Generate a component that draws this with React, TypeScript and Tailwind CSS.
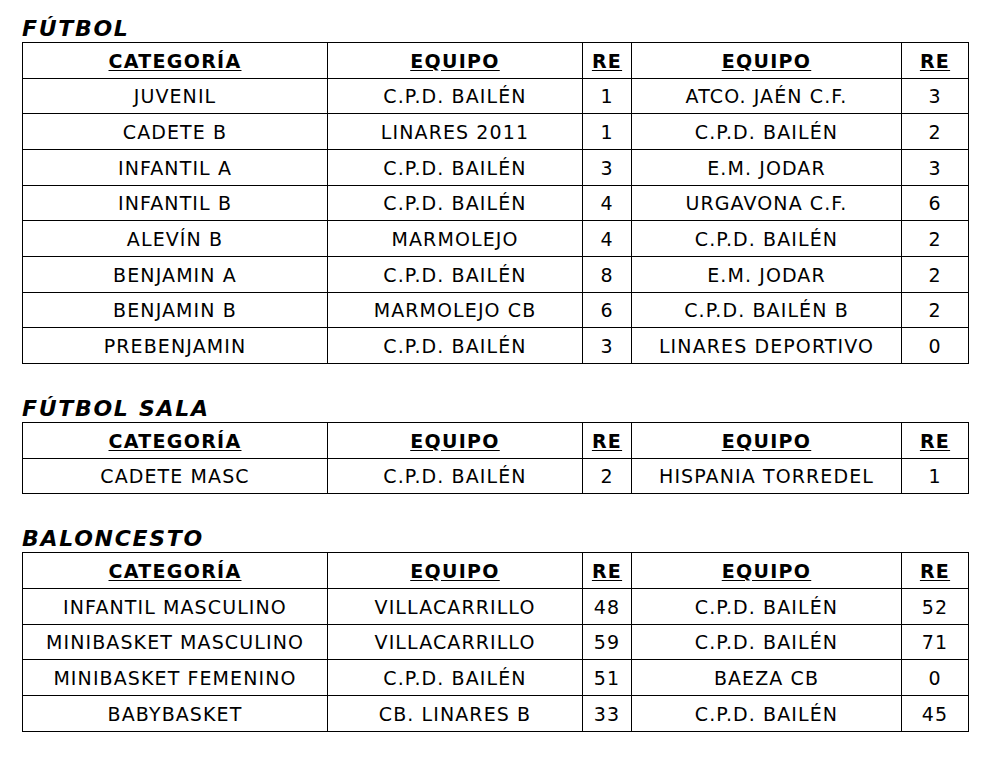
import React from "react";

type Row = [string, string, string, string, string];

const futbol: Row[] = [
  ["JUVENIL", "C.P.D. BAILÉN", "1", "ATCO. JAÉN C.F.", "3"],
  ["CADETE B", "LINARES 2011", "1", "C.P.D. BAILÉN", "2"],
  ["INFANTIL A", "C.P.D. BAILÉN", "3", "E.M. JODAR", "3"],
  ["INFANTIL B", "C.P.D. BAILÉN", "4", "URGAVONA C.F.", "6"],
  ["ALEVÍN B", "MARMOLEJO", "4", "C.P.D. BAILÉN", "2"],
  ["BENJAMIN A", "C.P.D. BAILÉN", "8", "E.M. JODAR", "2"],
  ["BENJAMIN B", "MARMOLEJO CB", "6", "C.P.D. BAILÉN B", "2"],
  ["PREBENJAMIN", "C.P.D. BAILÉN", "3", "LINARES DEPORTIVO", "0"],
];

const sala: Row[] = [["CADETE MASC", "C.P.D. BAILÉN", "2", "HISPANIA TORREDEL", "1"]];

const baloncesto: Row[] = [
  ["INFANTIL MASCULINO", "VILLACARRILLO", "48", "C.P.D. BAILÉN", "52"],
  ["MINIBASKET MASCULINO", "VILLACARRILLO", "59", "C.P.D. BAILÉN", "71"],
  ["MINIBASKET FEMENINO", "C.P.D. BAILÉN", "51", "BAEZA CB", "0"],
  ["BABYBASKET", "CB. LINARES B", "33", "C.P.D. BAILÉN", "45"],
];

function Table({ title, rows, first }: { title: string; rows: Row[]; first?: boolean }) {
  return (
    <div>
      <div
        className={`${first ? "pt-4" : "pt-[32px]"} text-[22px] leading-[26px] font-bold italic tracking-[1.7px] text-black`}
      >
        {title}
      </div>
      <table className="border-collapse table-fixed w-[946px] text-[19px] text-black">
        <colgroup>
          <col className="w-[305px]" />
          <col className="w-[255px]" />
          <col className="w-[49px]" />
          <col className="w-[270px]" />
          <col className="w-[67px]" />
        </colgroup>
        <thead>
          <tr className="h-[35.67px]">
            {["CATEGORÍA", "EQUIPO", "RE", "EQUIPO", "RE"].map((h, i) => (
              <th key={i} className="border border-black p-0 pt-[2px] text-center font-bold leading-none tracking-[1.3px]">
                <span className="underline underline-offset-2">{h}</span>
              </th>
            ))}
          </tr>
        </thead>
        <tbody>
          {rows.map((r, ri) => (
            <tr key={ri} className="h-[35.67px]">
              {r.map((c, ci) => (
                <td key={ci} className="border border-black p-0 pt-[2px] text-center leading-none tracking-[1.1px]">
                  {c}
                </td>
              ))}
            </tr>
          ))}
        </tbody>
      </table>
    </div>
  );
}

export default function App() {
  return (
    <div className="w-[998px] h-[758px] bg-white pl-[22px] font-['DejaVu_Sans',Verdana,sans-serif]">
      <Table title="FÚTBOL" rows={futbol} first />
      <Table title="FÚTBOL SALA" rows={sala} />
      <Table title="BALONCESTO" rows={baloncesto} />
    </div>
  );
}
